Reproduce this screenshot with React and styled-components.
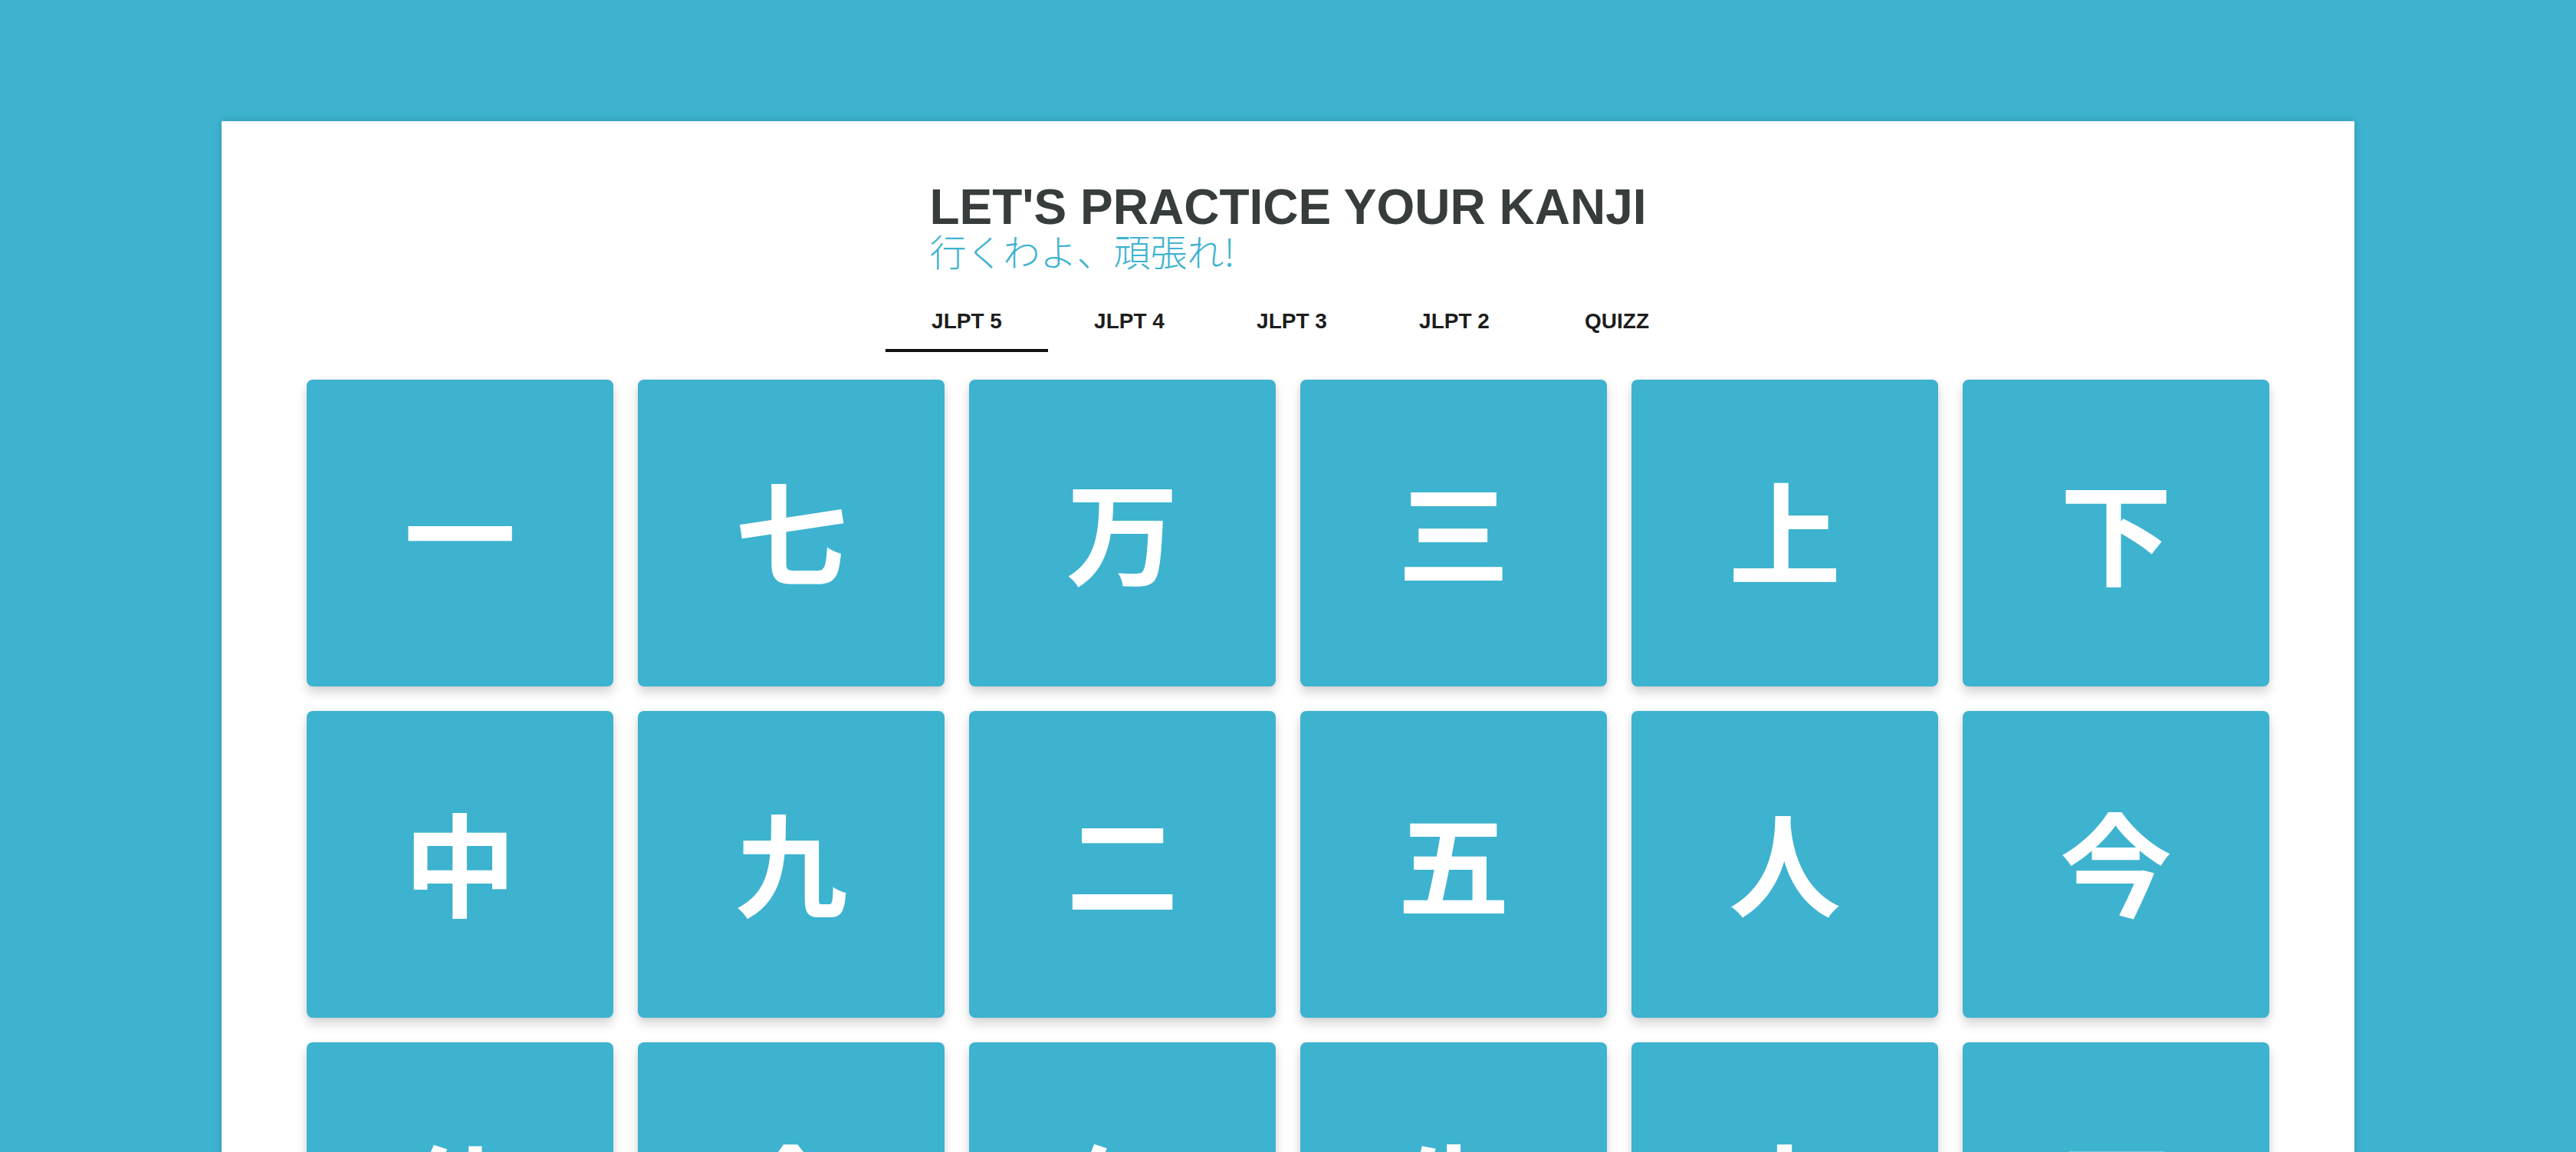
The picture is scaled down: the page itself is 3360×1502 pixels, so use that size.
import styled, { createGlobalStyle } from 'styled-components'

const BLUE = '#3db3d0'

const GlobalStyle = createGlobalStyle`
  body {
    margin: 0;
    background: ${BLUE};
    font-family: "Liberation Sans", Arial, sans-serif;
  }
`

const Page = styled.div`
  padding-top: 158px;
  min-height: 1344px;
`

const Panel = styled.main`
  box-sizing: border-box;
  width: 2782px;
  min-height: 1400px;
  margin: 0 auto;
  padding: 80px 111px 60px;
  background: #fff;
  box-shadow: 0 0 10px rgba(0, 0, 0, 0.18);
`

const Header = styled.header`
  display: flex;
  flex-direction: column;
  align-items: center;
`

const TitleBlock = styled.div`
  text-align: left;
`

const Title = styled.h1`
  margin: 0;
  font-family: "Liberation Sans", Arial, sans-serif;
  font-weight: 700;
  font-size: 64px;
  line-height: 64px;
  color: #363d3c;
`

const Subtitle = styled.p`
  margin: 0;
  font-family: "Noto Sans CJK JP", "Noto Sans", sans-serif;
  font-weight: 300;
  font-size: 48px;
  line-height: 48px;
  color: ${BLUE};
`

const Tabs = styled.nav`
  display: flex;
  margin: 29px 0 0 10px;
`

const Tab = styled.button`
  position: relative;
  width: 212px;
  height: 80px;
  display: flex;
  align-items: center;
  justify-content: center;
  padding: 0;
  border: none;
  background: transparent;
  font-family: "Liberation Sans", Arial, sans-serif;
  font-weight: 700;
  font-size: 28px;
  color: #1d1d1d;
  cursor: pointer;

  &::after {
    content: '';
    position: absolute;
    left: 0;
    right: 0;
    bottom: 0;
    height: 4px;
    background: ${({ $active }) => ($active ? '#111' : 'transparent')};
  }
`

const Grid = styled.section`
  display: grid;
  grid-template-columns: repeat(6, 400px);
  gap: 32px;
  margin-top: 36px;
`

const Card = styled.div`
  box-sizing: border-box;
  height: 400px;
  padding-bottom: 12px;
  display: flex;
  align-items: center;
  justify-content: center;
  border-radius: 8px;
  background: ${BLUE};
  color: #fff;
  font-family: "Noto Sans CJK JP", sans-serif;
  font-weight: 700;
  font-size: 146px;
  line-height: 1;
  box-shadow: 0 8px 14px rgba(0, 0, 0, 0.16), 0 0 6px rgba(0, 0, 0, 0.06);
`

const tabs = ['JLPT 5', 'JLPT 4', 'JLPT 3', 'JLPT 2', 'QUIZZ']

const kanji = [
  '一', '七', '万', '三', '上', '下',
  '中', '九', '二', '五', '人', '今',
  '休', '会', '何', '先', '六', '円',
]

const App = () => (
  <Page>
    <GlobalStyle />
    <Panel>
      <Header>
        <TitleBlock>
          <Title>LET'S PRACTICE YOUR KANJI</Title>
          <Subtitle>行くわよ、頑張れ!</Subtitle>
        </TitleBlock>
        <Tabs>
          {tabs.map((t, i) => (
            <Tab key={t} $active={i === 0}>{t}</Tab>
          ))}
        </Tabs>
      </Header>

      <Grid>
        {kanji.map((k) => (
          <Card key={k}>{k}</Card>
        ))}
      </Grid>
    </Panel>
  </Page>
)

export default App
